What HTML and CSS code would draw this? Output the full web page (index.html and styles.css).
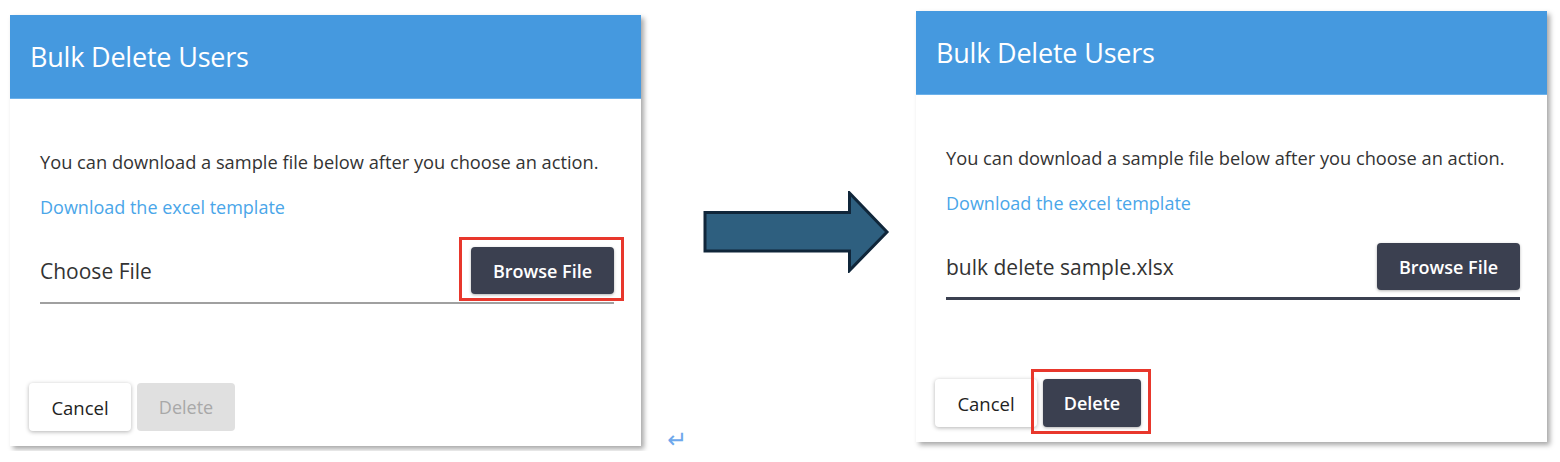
FILE: index.html
```html
<!DOCTYPE html>
<html lang="en">
  <head>
    <meta charset="UTF-8" />
    <meta name="viewport" content="width=device-width, initial-scale=1.0" />
    <title>Bulk Delete Users</title>
    <link rel="stylesheet" href="styles.css">
  </head>
  <body>
    <div class="stage">
      <section class="dialog dialog-before">
        <header class="dialog-head">
          <h2>Bulk Delete Users</h2>
        </header>
        <div class="dialog-body">
          <p class="hint">You can download a sample file below after you choose an action.</p>
          <a class="template-link" href="#">Download the excel template</a>
          <div class="file-row">
            <span class="file-name">Choose File</span>
            <button class="btn btn-dark btn-browse marked">Browse File</button>
          </div>
        </div>
        <footer class="dialog-foot">
          <button class="btn btn-light">Cancel</button>
          <button class="btn btn-disabled" disabled>Delete</button>
        </footer>
      </section>

      <div class="gap">
        <svg class="arrow" width="187" height="82" viewBox="0 0 187 82">
          <polygon points="2,21.5 146.5,21.5 146.5,2 184,41 146.5,79.5 146.5,60 2,60" fill="#2e5f7f" stroke="#10263a" stroke-width="3" stroke-linejoin="miter" />
        </svg>
        <span class="return-mark">↵</span>
      </div>

      <section class="dialog dialog-after">
        <header class="dialog-head">
          <h2>Bulk Delete Users</h2>
        </header>
        <div class="dialog-body">
          <p class="hint">You can download a sample file below after you choose an action.</p>
          <a class="template-link" href="#">Download the excel template</a>
          <div class="file-row file-row-filled">
            <span class="file-name">bulk delete sample.xlsx</span>
            <button class="btn btn-dark btn-browse">Browse File</button>
          </div>
        </div>
        <footer class="dialog-foot">
          <button class="btn btn-light">Cancel</button>
          <button class="btn btn-dark marked">Delete</button>
        </footer>
      </section>
    </div>
  </body>
</html>
```

FILE: styles.css
```css
body {
  margin: 0;
  background: #fff;
  font-family: "Open Sans", "Noto Sans", sans-serif;
  color: #333;
}
.stage {
  display: flex;
  align-items: flex-start;
  padding-left: 10px;
}
.dialog {
  width: 631px;
  background: #fff;
  box-shadow: 3px 3px 5px rgba(0, 0, 0, 0.35);
}
.dialog-before {
  margin-top: 15px;
}
.dialog-after {
  margin-top: 11px;
}
.dialog-head {
  height: 84px;
  background: #4599df;
  border-bottom: 1px solid #6cb1ea;
  box-sizing: border-box;
  display: flex;
  align-items: center;
  padding-left: 20px;
}
.dialog-head h2 {
  margin: 0;
  font-size: 27px;
  font-weight: 400;
  letter-spacing: -0.2px;
  color: #fff;
}
.dialog-body {
  padding: 53px 27px 0 30px;
}
.hint {
  margin: 0 0 25px;
  font-size: 18.25px;
  line-height: 20px;
  color: #333;
}
.template-link {
  display: block;
  font-size: 18px;
  line-height: 20px;
  color: #4aa6e9;
  text-decoration: none;
}
.file-row {
  margin-top: 30px;
  display: flex;
  align-items: center;
  justify-content: space-between;
  padding-bottom: 8px;
  border-bottom: 2px solid #a0a0a0;
}
.file-row-filled {
  border-bottom: 3px solid #3b4050;
  padding-bottom: 7px;
}
.file-name {
  font-size: 21px;
  color: #333;
}
.btn {
  font-family: inherit;
  font-size: 18px;
  border: none;
  border-radius: 4px;
  height: 48px;
  padding: 0;
  cursor: pointer;
}
.btn-dark {
  background: #3b4050;
  color: #fff;
  font-weight: 600;
  width: 98px;
  box-shadow: 0 1px 3px rgba(0, 0, 0, 0.3);
}
.btn-browse {
  width: 143px;
  height: 47px;
}
.btn-light {
  background: #fff;
  color: #222;
  font-size: 18.5px;
  width: 102px;
  box-shadow: 0 1px 4px rgba(0, 0, 0, 0.3);
}
.btn-disabled {
  background: #e0e0e0;
  color: #a8a8a8;
  width: 98px;
  cursor: default;
}
.dialog-foot {
  display: flex;
  gap: 6px;
  padding: 79px 0 15px 19px;
}
.marked {
  position: relative;
}
.marked::after {
  content: "";
  position: absolute;
  top: -10px;
  left: -12px;
  right: -10px;
  bottom: -7px;
  border: 3px solid #e8372c;
}
.gap {
  width: 275px;
  padding-top: 191px;
}
.arrow {
  display: block;
  margin-left: 62px;
}
.return-mark {
  display: block;
  margin: 156px 0 0 26px;
  font-family: "DejaVu Sans", sans-serif;
  font-size: 24px;
  line-height: 22px;
  color: #6ea8ec;
}
```
